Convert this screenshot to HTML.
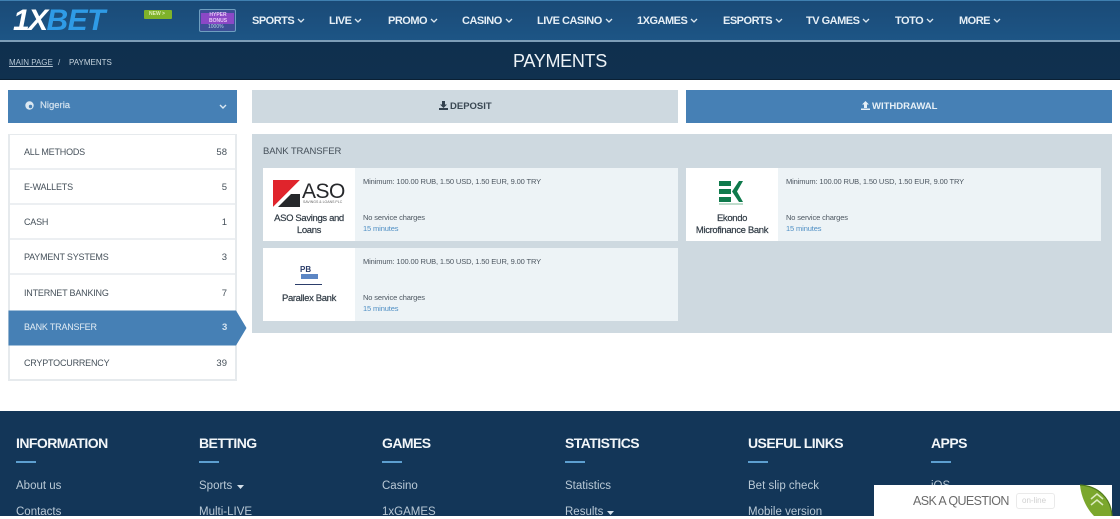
<!DOCTYPE html>
<html><head><meta charset="utf-8">
<style>
*{box-sizing:border-box;margin:0;padding:0}
html,body{width:1120px;height:516px;overflow:hidden;background:#fff;font-family:"Liberation Sans",sans-serif}
.a,.t{position:absolute;white-space:nowrap}
.t{line-height:1}
.nav{color:#e6eff6;font-size:11px;font-weight:bold;top:16px;letter-spacing:-.5px}
.nav svg{margin-left:3px;vertical-align:1px}
.side{left:10px;width:225px;height:35px;background:#fff;border-bottom:2px solid #eceff2}
.side b{position:absolute;left:14px;top:13px;font-weight:normal;font-size:9px;letter-spacing:-.2px;line-height:1;color:#45505a}
.side i{position:absolute;right:8px;top:13px;font-style:normal;font-size:9.5px;line-height:1;color:#45505a}
.card{background:#edf3f6;width:415px;height:73px}
.logo{position:absolute;left:0;top:0;width:92px;height:73px;background:#fff}
.name{position:absolute;left:0;width:92px;text-align:center;font-size:9.5px;letter-spacing:-.35px;line-height:12px;color:#2f3a44;white-space:normal;-webkit-text-stroke:.2px #2f3a44}
.s{position:absolute;left:100px;font-size:7.5px;letter-spacing:-.13px;line-height:1;color:#4c5660;white-space:nowrap}
.b{color:#4f8fc4}
.fh{color:#f2f6f9;font-size:14px;font-weight:bold;top:436px;letter-spacing:-.55px}
.fb{position:absolute;top:461px;width:20px;height:2px;background:#5d9fd0}
.fl{color:#b9c9d6;font-size:11.5px}
</style></head><body>

<!-- header -->
<div class="a" style="left:0;top:0;width:1120px;height:42px;background:linear-gradient(#1a4a77,#1d5585);border-top:1px solid #3f7fb0;border-bottom:2px solid #7d9db7"></div>
<div class="a" style="left:0;top:42px;width:1120px;height:38px;background:linear-gradient(#0f2f4e,#10314f);border-bottom:1px solid #0a2034"></div>

<div class="t" style="left:13px;top:6px;font-size:30px;font-weight:bold;font-style:italic;letter-spacing:-1.6px;color:#fff">1X<span style="color:#2f9be6;letter-spacing:-.5px">BET</span></div>
<div class="a" style="left:144px;top:10px;width:28px;height:9px;background:#7fb22a;border-radius:1px"></div>
<div class="t" style="left:149px;top:12px;font-size:5px;font-weight:bold;color:#dff0b8">NEW &gt;</div>
<div class="a" style="left:199px;top:9px;width:37px;height:23px;border:1px solid #6f9fc0;border-radius:2px;background:#3d4f97"></div>
<div class="a" style="left:201px;top:13px;width:33px;height:11px;background:#8b48c6"></div>
<div class="t" style="left:203px;top:13px;font-size:5px;line-height:5.5px;white-space:normal;width:30px;text-align:center;color:#e8c9f7;font-weight:bold">HYPER BONUS</div>
<div class="t" style="left:208px;top:25px;font-size:5px;color:#b8d3e5">1000%</div>

<div class="t nav" style="left:252px">SPORTS<svg width="8" height="5" viewBox="0 0 8 5"><path d="M1 1l3 3 3-3" fill="none" stroke="#dbe7f0" stroke-width="1.3"/></svg></div>
<div class="t nav" style="left:329px">LIVE<svg width="8" height="5" viewBox="0 0 8 5"><path d="M1 1l3 3 3-3" fill="none" stroke="#dbe7f0" stroke-width="1.3"/></svg></div>
<div class="t nav" style="left:388px">PROMO<svg width="8" height="5" viewBox="0 0 8 5"><path d="M1 1l3 3 3-3" fill="none" stroke="#dbe7f0" stroke-width="1.3"/></svg></div>
<div class="t nav" style="left:462px">CASINO<svg width="8" height="5" viewBox="0 0 8 5"><path d="M1 1l3 3 3-3" fill="none" stroke="#dbe7f0" stroke-width="1.3"/></svg></div>
<div class="t nav" style="left:537px">LIVE CASINO<svg width="8" height="5" viewBox="0 0 8 5"><path d="M1 1l3 3 3-3" fill="none" stroke="#dbe7f0" stroke-width="1.3"/></svg></div>
<div class="t nav" style="left:637px">1XGAMES<svg width="8" height="5" viewBox="0 0 8 5"><path d="M1 1l3 3 3-3" fill="none" stroke="#dbe7f0" stroke-width="1.3"/></svg></div>
<div class="t nav" style="left:723px">ESPORTS<svg width="8" height="5" viewBox="0 0 8 5"><path d="M1 1l3 3 3-3" fill="none" stroke="#dbe7f0" stroke-width="1.3"/></svg></div>
<div class="t nav" style="left:806px">TV GAMES<svg width="8" height="5" viewBox="0 0 8 5"><path d="M1 1l3 3 3-3" fill="none" stroke="#dbe7f0" stroke-width="1.3"/></svg></div>
<div class="t nav" style="left:895px">TOTO<svg width="8" height="5" viewBox="0 0 8 5"><path d="M1 1l3 3 3-3" fill="none" stroke="#dbe7f0" stroke-width="1.3"/></svg></div>
<div class="t nav" style="left:959px">MORE<svg width="8" height="5" viewBox="0 0 8 5"><path d="M1 1l3 3 3-3" fill="none" stroke="#dbe7f0" stroke-width="1.3"/></svg></div>

<div class="t" style="left:9px;top:59px;font-size:8px;color:#b5c6d4;text-decoration:underline">MAIN PAGE</div>
<div class="t" style="left:58px;top:59px;font-size:8px;color:#b5c6d4">/</div>
<div class="t" style="left:69px;top:59px;font-size:8px;color:#c8d5df">PAYMENTS</div>
<div class="t" style="left:513px;top:52px;font-size:18px;color:#eef3f7;letter-spacing:-.3px">PAYMENTS</div>

<!-- country + tabs -->
<div class="a" style="left:8px;top:90px;width:229px;height:33px;background:#4680b5"></div>
<svg class="a" style="left:25px;top:101px" width="9" height="9" viewBox="0 0 9 9"><circle cx="4.5" cy="4.5" r="4.2" fill="#dbe8f2"/><circle cx="5.5" cy="5.5" r="1.7" fill="#4680b5"/></svg>
<div class="t" style="left:40px;top:101px;font-size:9.5px;color:#d2e1ee;-webkit-text-stroke:.2px #d2e1ee">Nigeria</div>
<svg class="a" style="left:219px;top:104px" width="8" height="6" viewBox="0 0 8 6"><path d="M1 1l3 3 3-3" fill="none" stroke="#dbe8f2" stroke-width="1.4"/></svg>

<div class="a" style="left:252px;top:90px;width:426px;height:33px;background:#ced9e0"></div>
<svg class="a" style="left:439px;top:101px" width="9" height="9" viewBox="0 0 9 9"><path d="M3 0h3v3.500h2L4.500 7 1 3.500h2zM0 7h9v2H0z" fill="#33414e"/></svg>
<div class="t" style="left:450px;top:101px;font-size:9.5px;font-weight:bold;color:#3a4853;margin-top:.5px">DEPOSIT</div>
<div class="a" style="left:686px;top:90px;width:426px;height:33px;background:#4680b5"></div>
<svg class="a" style="left:861px;top:101px" width="9" height="9" viewBox="0 0 9 9"><path d="M3 7h3V3.500h2L4.500 0 1 3.500h2zM0 7.500h9V9H0z" fill="#e6eff6"/></svg>
<div class="t" style="left:872px;top:101px;font-size:9.5px;font-weight:bold;color:#e6eff6;margin-top:.5px">WITHDRAWAL</div>

<!-- sidebar -->
<div class="a" style="left:8px;top:134px;width:229px;height:247px;background:#fff;border:2px solid #e6eaed"></div>
<div class="a side" style="top:135px"><b>ALL METHODS</b><i>58</i></div>
<div class="a side" style="top:170px"><b>E-WALLETS</b><i>5</i></div>
<div class="a side" style="top:205px"><b>CASH</b><i>1</i></div>
<div class="a side" style="top:240px"><b>PAYMENT SYSTEMS</b><i>3</i></div>
<div class="a side" style="top:276px;border:0"><b>INTERNET BANKING</b><i>7</i></div>
<div class="a side" style="top:346px;height:33px;border:0"><b>CRYPTOCURRENCY</b><i>39</i></div>
<svg class="a" style="left:8px;top:310px" width="239" height="36" viewBox="0 0 239 36"><path d="M0.500 0.500H228L238.500 18 228 35.500H0.500z" fill="#4680b5"/></svg>
<div class="t" style="left:24px;top:323px;font-size:9px;letter-spacing:-.2px;color:#e3edf5">BANK TRANSFER</div>
<div class="t" style="left:222px;top:323px;font-size:9.5px;color:#d5e4f0;font-weight:bold">3</div>

<!-- panel -->
<div class="a" style="left:252px;top:134px;width:860px;height:199px;background:#ced9e0"></div>
<div class="t" style="left:263px;top:147px;font-size:9.5px;letter-spacing:-.1px;color:#45505a">BANK TRANSFER</div>

<div class="a card" style="left:263px;top:168px">
  <div class="logo">
    <svg class="a" style="left:10px;top:12px" width="28" height="27" viewBox="0 0 28 27"><path d="M0 0h27L0 27z" fill="#e0242c"/><path d="M5 27L18 14h9v13z" fill="#26282b"/><path d="M0 27L27 0v2L3 27z" fill="#fff"/></svg>
    <div class="t" style="left:39px;top:13px;font-size:21px;color:#26282b;letter-spacing:-.5px">ASO</div>
    <div class="t" style="left:40px;top:33px;font-size:3.500px;color:#666">SAVINGS &amp; LOANS PLC</div>
    <div class="name" style="top:45px">ASO Savings and<br>Loans</div>
  </div>
  <div class="s" style="top:10px">Minimum: 100.00 RUB, 1.50 USD, 1.50 EUR, 9.00 TRY</div>
  <div class="s" style="top:46px">No service charges</div>
  <div class="s b" style="top:57px">15 minutes</div>
</div>

<div class="a card" style="left:686px;top:168px">
  <div class="logo">
    <svg class="a" style="left:33px;top:13px" width="25" height="24" viewBox="0 0 25 24"><path d="M0 0h12v5H0zM0 8h12v5H0zM0 16h12v5H0zM13 10.500L20 0h4l-6 10.500 6 10.500h-4z" fill="#0f7a4c"/><rect x="0" y="22.500" width="24" height="1" fill="#7fb89a"/></svg>
    <div class="name" style="top:45px">Ekondo<br>Microfinance Bank</div>
  </div>
  <div class="s" style="top:10px">Minimum: 100.00 RUB, 1.50 USD, 1.50 EUR, 9.00 TRY</div>
  <div class="s" style="top:46px">No service charges</div>
  <div class="s b" style="top:57px">15 minutes</div>
</div>

<div class="a card" style="left:263px;top:248px">
  <div class="logo">
    <div class="t" style="left:37px;top:18px;font-size:8px;font-weight:bold;color:#2c3e6b">PB</div>
    <div class="a" style="left:38px;top:26px;width:17px;height:5px;background:#5c86c4"></div>
    <div class="a" style="left:32px;top:36px;width:27px;height:1px;background:#2c3e6b"></div>
    <div class="name" style="top:45px">Parallex Bank</div>
  </div>
  <div class="s" style="top:10px">Minimum: 100.00 RUB, 1.50 USD, 1.50 EUR, 9.00 TRY</div>
  <div class="s" style="top:46px">No service charges</div>
  <div class="s b" style="top:57px">15 minutes</div>
</div>

<!-- footer -->
<div class="a" style="left:0;top:411px;width:1120px;height:105px;background:#133658"></div>
<div class="t fh" style="left:16px">INFORMATION</div><div class="fb" style="left:16px"></div>
<div class="t fh" style="left:199px">BETTING</div><div class="fb" style="left:199px"></div>
<div class="t fh" style="left:382px">GAMES</div><div class="fb" style="left:382px"></div>
<div class="t fh" style="left:565px">STATISTICS</div><div class="fb" style="left:565px"></div>
<div class="t fh" style="left:748px">USEFUL LINKS</div><div class="fb" style="left:748px"></div>
<div class="t fh" style="left:931px">APPS</div><div class="fb" style="left:931px"></div>

<div class="t fl" style="left:16px;top:481px">About us</div>
<div class="t fl" style="left:199px;top:481px">Sports</div>
<svg class="a" style="left:237px;top:485px" width="7" height="4" viewBox="0 0 7 4"><path d="M0 0h7L3.500 4z" fill="#d5e0e9"/></svg>
<div class="t fl" style="left:382px;top:481px">Casino</div>
<div class="t fl" style="left:565px;top:481px">Statistics</div>
<div class="t fl" style="left:748px;top:481px">Bet slip check</div>
<div class="t fl" style="left:931px;top:481px">iOS</div>

<div class="t fl" style="left:16px;top:507px">Contacts</div>
<div class="t fl" style="left:199px;top:507px">Multi-LIVE</div>
<div class="t fl" style="left:382px;top:507px">1xGAMES</div>
<div class="t fl" style="left:565px;top:507px">Results</div>
<svg class="a" style="left:607px;top:511px" width="7" height="4" viewBox="0 0 7 4"><path d="M0 0h7L3.500 4z" fill="#d5e0e9"/></svg>
<div class="t fl" style="left:748px;top:507px">Mobile version</div>

<!-- chat -->
<div class="a" style="left:874px;top:485px;width:238px;height:31px;background:#fff"></div>
<svg class="a" style="left:1078px;top:484px" width="36" height="32" viewBox="0 0 36 32"><path d="M2 1C20 2 33 14 34 32H16C8 24 3 12 2 1z" fill="#7ba72d"/><path d="M2 1C20 2 33 14 34 32" fill="none" stroke="#4f7a1c" stroke-width="1.200"/><path d="M13 15l6-5 6 5M13 21l6-5 6 5" fill="none" stroke="#dcebc0" stroke-width="1.500"/></svg>
<div class="t" style="left:913px;top:495px;font-size:12.500px;color:#6b6b6b;letter-spacing:-.6px">ASK A QUESTION</div>
<div class="a" style="left:1016px;top:493px;width:39px;height:16px;border:1px solid #eaeaea;border-radius:3px"></div>
<div class="t" style="left:1022px;top:497px;font-size:8px;color:#d0d0d0">on-line</div>
</body></html>
